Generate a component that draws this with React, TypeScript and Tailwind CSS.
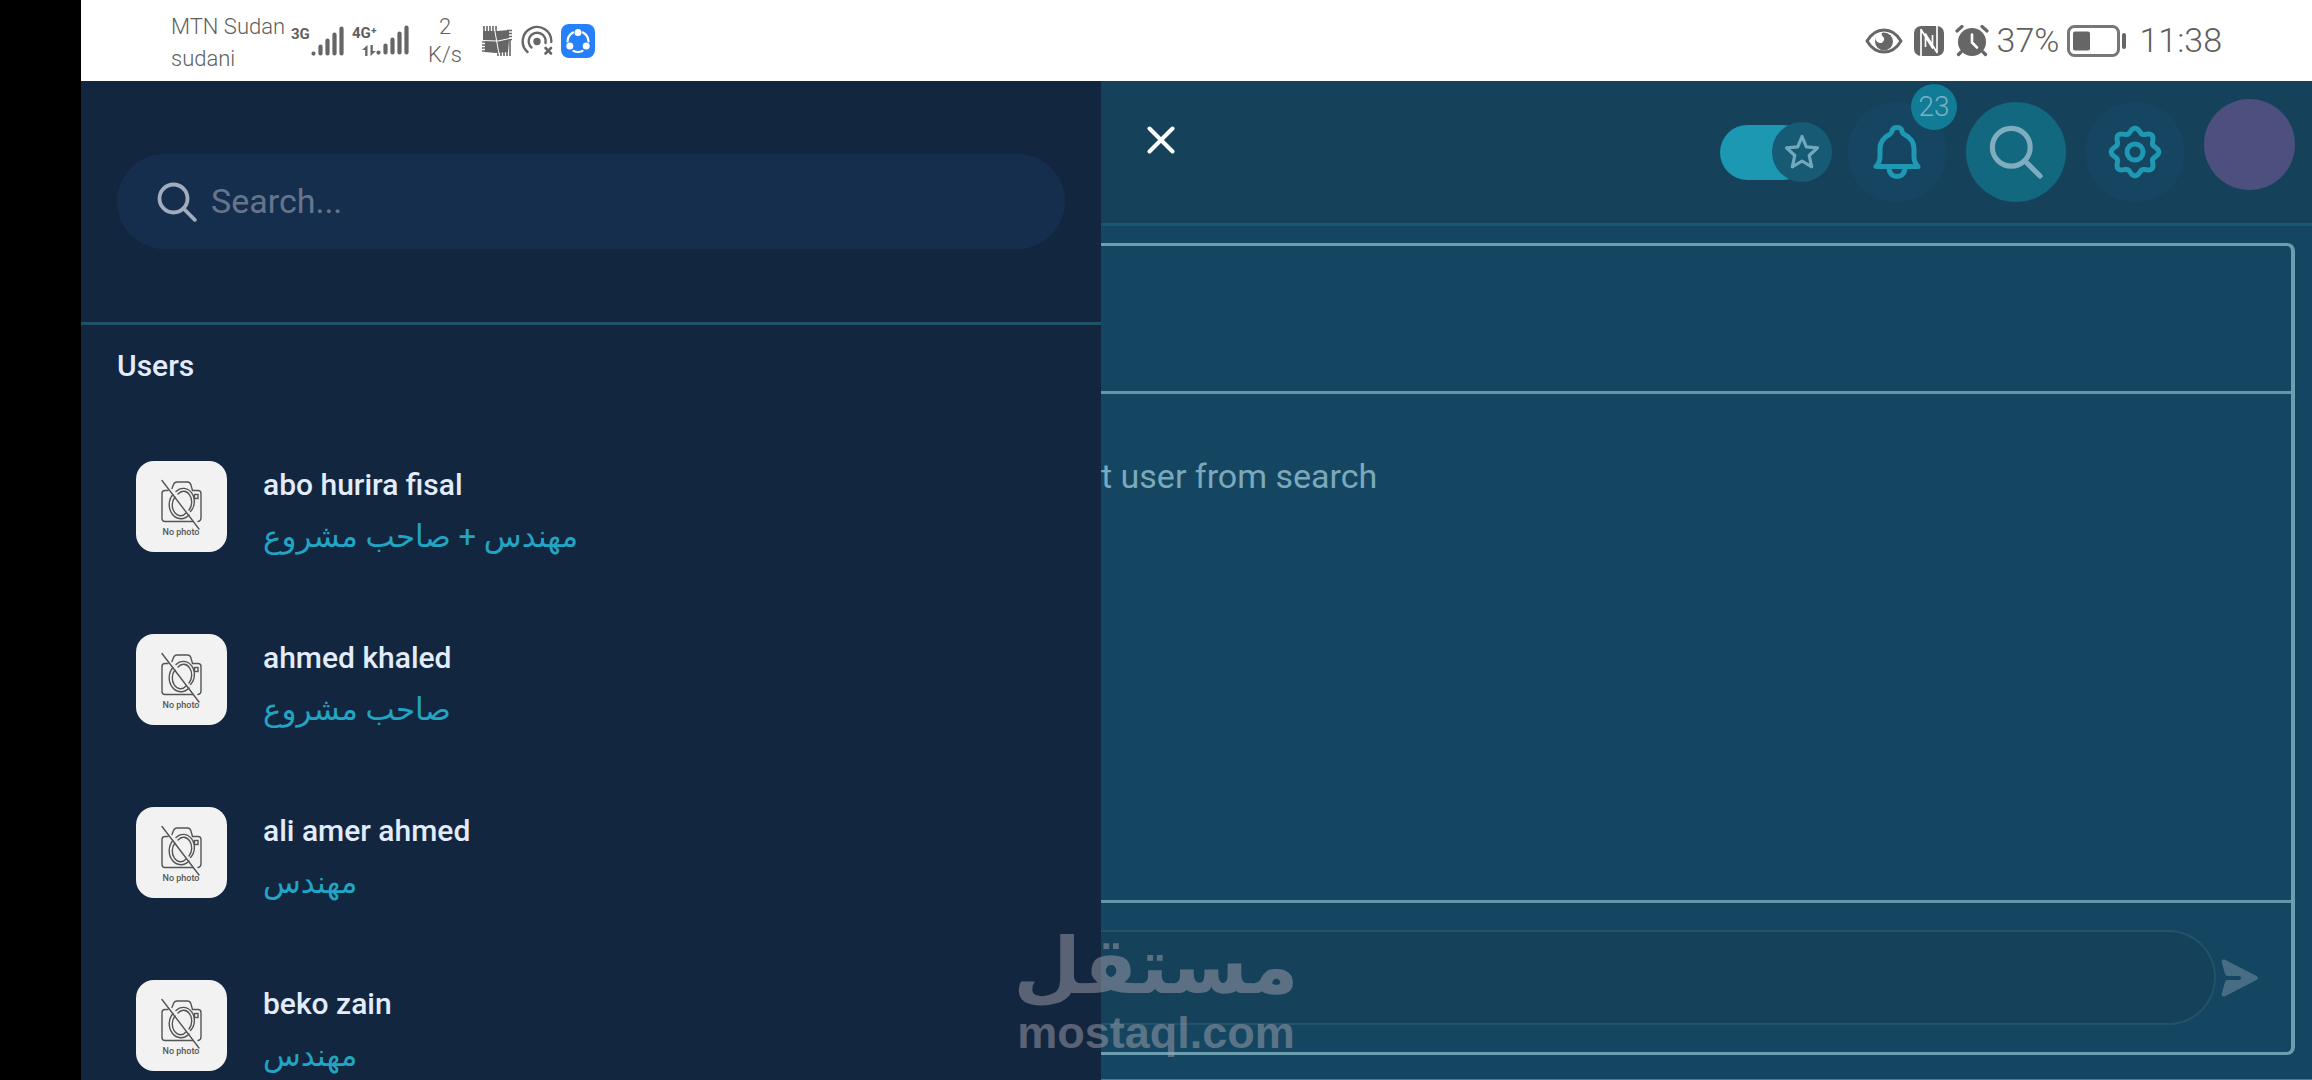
import type { ReactNode } from "react";

type User = { name: string; role: string };

const users: User[] = [
  { name: "abo hurira fisal", role: "مهندس + صاحب مشروع" },
  { name: "ahmed khaled", role: "صاحب مشروع" },
  { name: "ali amer ahmed", role: "مهندس" },
  { name: "beko zain", role: "مهندس" },
];

// wavy outline of the settings cog, eight lobes around the centre
const cogPath =
  Array.from({ length: 96 }, (_, i) => {
    const angle = (i / 96) * Math.PI * 2;
    const radius = 21.5 + 2.4 * Math.cos(angle * 8);
    const x = 27 + radius * Math.sin(angle);
    const y = 27 - radius * Math.cos(angle);
    return `${i === 0 ? "M" : "L"}${x.toFixed(2)} ${y.toFixed(2)}`;
  }).join("") + "Z";

const SearchIcon = ({ className }: { className: string }) => (
  <svg viewBox="0 0 40 40" fill="none" stroke="currentColor" strokeWidth="3.8" strokeLinecap="round" className={className}>
    <circle cx="16.500" cy="16.500" r="14" />
    <path d="M26.500 26.500l11.300 11.300" />
  </svg>
);

const BellIcon = () => (
  <svg viewBox="0 0 48 54" fill="none" stroke="currentColor" strokeWidth="5" strokeLinecap="round" strokeLinejoin="round" className="h-[54px] w-12">
    <path d="M3 41.500h42c-2.500-2.500-4-6-4-10V24c0-6.500-3.500-11.500-9.500-14.500-1.500-.8-2.300-2-2.500-3.500-.4-2-2-3.500-5-3.500s-4.600 1.500-5 3.500c-.2 1.500-1 2.700-2.500 3.500C10.500 12.500 7 17.500 7 24v7.500c0 4-1.500 7.500-4 10z" />
    <path d="M16 43c0 5 3.500 8.500 8 8.500s8-3.500 8-8.500" />
  </svg>
);

const CogIcon = () => (
  <svg viewBox="0 0 54 54" fill="none" stroke="currentColor" strokeWidth="5" strokeLinejoin="round" className="size-[54px]">
    <path d={cogPath} />
    <circle cx="27" cy="27" r="8" />
  </svg>
);

const StarIcon = () => (
  <svg viewBox="0 0 36 36" fill="none" stroke="currentColor" strokeWidth="3.2" strokeLinejoin="round" className="size-9">
    <path d="M18 2.500l4.300 10.300 11.200 1-8.300 7.700 2.500 11.300L18 27l-9.700 5.800 2.500-11.300-8.300-7.700 11.200-1z" />
  </svg>
);

const NoPhoto = () => (
  <svg viewBox="0 0 91 91" className="size-[91px] shrink-0 rounded-[18px] bg-[#f2f2f2]" fill="none" stroke="#555" strokeWidth="1.4" strokeLinecap="round">
    <path d="M36 27.500l1.500-4Q38.500 21 41 21h10.500q2.500 0 3.300 2.500L56.500 29.500H62q3 0 3 3V57q0 3-3 3.500M57 60.500H29q-3 0-3-3V32.500q0-3 3-3h3" />
    <path d="M40 30.500a11 13 0 0 1 14.500 20M53 54a11 13 0 0 1-16-20.500M42 33a8 10.500 0 0 1 11 16M50 52a8 10.500 0 0 1-11-16" />
    <rect x="58.500" y="33.500" width="3.500" height="4" />
    <path d="M26 19.500L63 68" />
    <text x="45" y="74" textAnchor="middle" fontSize="9" fontWeight="500" fill="#555" stroke="none" fontFamily="Roboto, sans-serif">
      No photo
    </text>
  </svg>
);

const Signal = () => (
  <svg viewBox="0 0 33 30" className="h-[30px] w-[33px]" stroke="#666" strokeWidth="4.2" strokeLinecap="round">
    <path d="M2.500 27.500v.1M9.500 27.500v-7M16.500 27.500v-13M23.500 27.500v-19M30.500 27.500V2.500" />
  </svg>
);

const DataArrows = () => (
  <svg viewBox="0 0 14 11" className="h-[11px] w-[14px]" fill="#666">
    <path d="M0 5L5.500 0v11H3.200V5zM14 6L8.500 11V0h2.300v6z" />
  </svg>
);

const ChipIcon = () => (
  <svg viewBox="0 0 32 32" className="size-8">
    <path d="M2 6h14l12-1v11l-1 11-12 1-11-1V16H2z" fill="#666" />
    <path
      d="M3 1v6M6 1v6M9 1v6M12 1v6M15 1v6M26 5.500h5M26 8.500h5M26 11.500h5M26 14.500h5M1 17h5M1 20h5M1 23h5M1 26h5M17 26v5M20 26v5M23 26v5M26 26v5M29 15v16"
      stroke="#666"
      strokeWidth="1.6"
    />
    <path d="M13.500 4l4.500 25M1 15.500l16 .5 14-3" fill="none" stroke="#fff" strokeWidth="1" />
  </svg>
);

const HotspotIcon = () => (
  <svg viewBox="0 0 32 32" className="size-8" fill="none" stroke="#666" strokeWidth="2.4" strokeLinecap="round">
    <path d="M6.500 27A14.300 14.300 0 1 1 30.300 17" />
    <path d="M10.500 22.500A8.500 8.500 0 1 1 24.500 18" />
    <circle cx="16" cy="16.500" r="2.500" fill="#666" />
    <path strokeWidth="2.6" d="M24.500 23l5.500 5.500M30 23l-5.500 5.500" />
  </svg>
);

const ShareIcon = () => (
  <svg viewBox="0 0 34 34" className="size-[34px]">
    <rect width="34" height="34" rx="8" fill="#2680fb" />
    <path d="M22 8.500a11 11 0 0 1 5.500 9M21.500 27a11 11 0 0 1-9 0M6.500 17.500a11 11 0 0 1 5.500-9" fill="none" stroke="#fff" strokeWidth="2.2" strokeLinecap="round" />
    <g fill="#fff">
      <circle cx="17" cy="8.500" r="3.500" />
      <circle cx="8.800" cy="22" r="3.500" />
      <circle cx="25.200" cy="22" r="3.500" />
    </g>
  </svg>
);

const EyeIcon = () => (
  <svg viewBox="0 0 38 26" className="h-[26px] w-[38px]">
    <path d="M2 13C6.500 5.500 12 2 19 2s12.500 3.500 17 11c-4.500 7.500-10 11-17 11S6.500 20.500 2 13z" fill="none" stroke="#666" strokeWidth="3" strokeLinejoin="round" />
    <circle cx="19" cy="13.500" r="9" fill="#666" />
    <path d="M14 5c-1.800 1.500-3.500 4-3.300 6.500 1 3 4 4.500 6.500 3 2.600-1.600 2.600-4.500.6-6-.9-.7-1.500-2-.8-4z" fill="#fff" />
  </svg>
);

const NfcIcon = () => (
  <svg viewBox="0 0 30 30" className="size-[30px]">
    <rect width="30" height="30" rx="7" fill="#666" />
    <path d="M7 30V3.500L18.500 22V9M23 0v26.500L11.500 8v13" fill="none" stroke="#fff" strokeWidth="1.700" strokeLinejoin="round" />
  </svg>
);

const AlarmIcon = () => (
  <svg viewBox="0 0 34 32" className="h-8 w-[34px]" strokeLinecap="round">
    <circle cx="17" cy="17" r="14" fill="#666" />
    <path d="M2 6l5-4.500M32 6l-5-4.500M6 27l-2.500 2.500M28 27l2.500 2.500" stroke="#666" strokeWidth="3.2" />
    <path d="M17 9.500v8l5 5" fill="none" stroke="#fff" strokeWidth="2.6" />
  </svg>
);

const BatteryIcon = () => (
  <svg viewBox="0 0 60 32" className="h-8 w-[60px]">
    <rect x="1.500" y="1.500" width="50" height="29" rx="6" fill="none" stroke="#777" strokeWidth="3" />
    <rect x="6" y="6.500" width="17" height="19" rx="2" fill="#666" />
    <path d="M57 10v12" stroke="#666" strokeWidth="4" strokeLinecap="round" />
  </svg>
);

const SendIcon = () => (
  <svg viewBox="0 0 38 38" className="size-[38px]" fill="currentColor">
    <path d="M3.500.6l32 16.300q3 2.100 0 4.200l-32 16.300Q.4 38.300.6 35L4 23q.6-1.900 2.500-1.900H18q2.100-.2 2.100-2.100T18 16.900H6.500Q4.600 16.900 4 15L.6 3Q.4-.3 3.500.6z" />
  </svg>
);

const StatusBar = () => (
  <div className="flex h-[81px] shrink-0 items-center justify-between bg-white px-[90px] font-['Roboto',sans-serif] font-light text-[#5f5f5f]">
    <div className="flex items-center">
      <div className="w-[120px] pt-1 text-[22px] leading-8 whitespace-nowrap">
        <p>MTN Sudan</p>
        <p>sudani</p>
      </div>
      <div className="flex w-[53px] items-start">
        <span className="w-[20px] text-[15px] leading-4 font-bold">3G</span>
        <Signal />
      </div>
      <div className="ml-2 flex items-start">
        <div className="flex w-[24px] flex-col items-end gap-[4px]">
          <span className="w-full text-[15px] leading-4 font-bold">4G⁺</span>
          <DataArrows />
        </div>
        <Signal />
      </div>
      <div className="ml-4 w-10 text-center text-[22px] leading-7">
        <p>2</p>
        <p>K/s</p>
      </div>
      <div className="ml-4 flex items-center gap-2">
        <ChipIcon />
        <HotspotIcon />
        <ShareIcon />
      </div>
    </div>
    <div className="flex items-center text-[34px]">
      <div className="flex items-center gap-[11px]">
        <EyeIcon />
        <NfcIcon />
        <AlarmIcon />
      </div>
      <span className="ml-2">37%</span>
      <div className="mr-3 ml-2">
        <BatteryIcon />
      </div>
      <span>11:38</span>
    </div>
  </div>
);

type RoundButtonProps = { label: string; className: string; children: ReactNode };

const RoundButton = ({ label, className, children }: RoundButtonProps) => (
  <button aria-label={label} className={`relative flex size-[100px] items-center justify-center rounded-full ${className}`}>
    {children}
  </button>
);

const Sidebar = () => (
  <aside className="min-w-0 overflow-hidden bg-[#13263f]">
    <div className="border-b-3 border-[#1f5266] px-9 py-[73px]">
      <label className="flex h-[95px] items-center gap-[14px] rounded-full bg-[#162e4d] px-10">
        <SearchIcon className="size-10 shrink-0 text-[#a1acbd]" />
        <input
          type="text"
          aria-label="Search"
          placeholder="Search..."
          className="w-full min-w-0 bg-transparent text-[34px] text-white outline-none placeholder:text-[#66758b]"
        />
      </label>
    </div>
    <h2 className="px-9 pt-[23px] pb-9 text-[30px] leading-9 font-medium text-[#e2ecfb]">Users</h2>
    <ul>
      {users.map((user) => (
        <li key={user.name} className="flex items-center gap-9 py-[35px] pl-[55px]">
          <NoPhoto />
          <div>
            <p className="text-[30px] leading-[60px] font-medium text-[#e2ecfb]">{user.name}</p>
            <p className="text-[31px] leading-[43px] text-[#22a5c3]">
              <bdi>{user.role}</bdi>
            </p>
          </div>
        </li>
      ))}
    </ul>
  </aside>
);

const Header = () => (
  <header className="flex h-[145px] items-center justify-between border-b-3 border-[#1b566f] bg-[#15425a] pr-[17px] pl-[46px]">
    <button aria-label="Close" className="pb-6 text-white">
      <svg viewBox="0 0 28 28" className="size-7" stroke="currentColor" strokeWidth="4" strokeLinecap="round">
        <path d="M2.500 2.500l23 23M25.500 2.500l-23 23" />
      </svg>
    </button>
    <div className="flex items-center gap-[15px]">
      <label className="relative flex w-28 items-center">
        <input type="checkbox" defaultChecked aria-label="Favorites" className="sr-only" />
        <span className="h-[55px] w-[90px] rounded-full bg-[#1c98b2]" />
        <span className="absolute right-0 flex size-[60px] items-center justify-center rounded-full bg-[#165b73] text-[#70a9bb]">
          <StarIcon />
        </span>
      </label>
      <div className="flex items-center gap-[19px]">
        <RoundButton label="Notifications" className="bg-[#154560] text-[#1f98b3]">
          <BellIcon />
          <span className="absolute -top-[18px] -right-[10px] flex size-[46px] items-center justify-center rounded-full bg-[#127b95] text-[28px] font-light text-[#7db1c2]">
            23
          </span>
        </RoundButton>
        <RoundButton label="Search" className="bg-[#12687f] text-[#7fadbf]">
          <SearchIcon className="size-[54px]" />
        </RoundButton>
        <RoundButton label="Settings" className="bg-[#154560] text-[#1f98b3]">
          <CogIcon />
        </RoundButton>
        <a href="#profile" aria-label="Profile" className="pb-4">
          <span className="block size-[91px] rounded-full bg-[#4d4f7f]" />
        </a>
      </div>
    </div>
  </header>
);

const Chat = () => (
  <main className="flex min-h-0 flex-1 flex-col border-b border-[#4a7d94] pt-[17px] pr-[17px] pb-6">
    <section className="flex flex-1 flex-col rounded-r-lg border-y-3 border-r-4 border-[#6d9db0]">
      <div className="h-[148px] border-b-3 border-[#6496aa]" />
      <p className="flex-1 pt-[60px] text-[34px] leading-[44px] text-[#7ba9bc]">t user from search</p>
      <form className="flex items-center gap-[5px] border-t-3 border-[#6496aa] py-[27px] pr-8">
        <input
          type="text"
          aria-label="Message"
          className="h-[95px] min-w-0 flex-1 rounded-r-full border-y-2 border-r-2 border-[#235369] bg-[#15425a] px-9 text-[34px] text-[#7ba9bc] outline-none"
        />
        <button type="button" aria-label="Send" className="text-[#466d83]">
          <SendIcon />
        </button>
      </form>
    </section>
  </main>
);

const Watermark = () => (
  <div className="pointer-events-none absolute inset-x-0 bottom-0 flex flex-col items-center font-bold text-[#a0a0ad] opacity-50">
    <span dir="rtl" className="font-['DejaVu_Sans',sans-serif] text-[78px] leading-[80px]">
      مستقل
    </span>
    <span className="pb-5 font-['Liberation_Sans',sans-serif] text-[45px] leading-[54px]">mostaql.com</span>
  </div>
);

const App = () => (
  <div className="relative flex h-screen flex-col overflow-hidden bg-black pl-[81px] font-['Roboto','DejaVu_Sans',sans-serif]">
    <StatusBar />
    <div className="grid min-h-0 flex-1 grid-cols-[1020fr_1211fr] bg-[#154661]">
      <Sidebar />
      <div className="flex min-h-0 min-w-0 flex-col">
        <Header />
        <Chat />
      </div>
    </div>
    <Watermark />
  </div>
);

export default App;
